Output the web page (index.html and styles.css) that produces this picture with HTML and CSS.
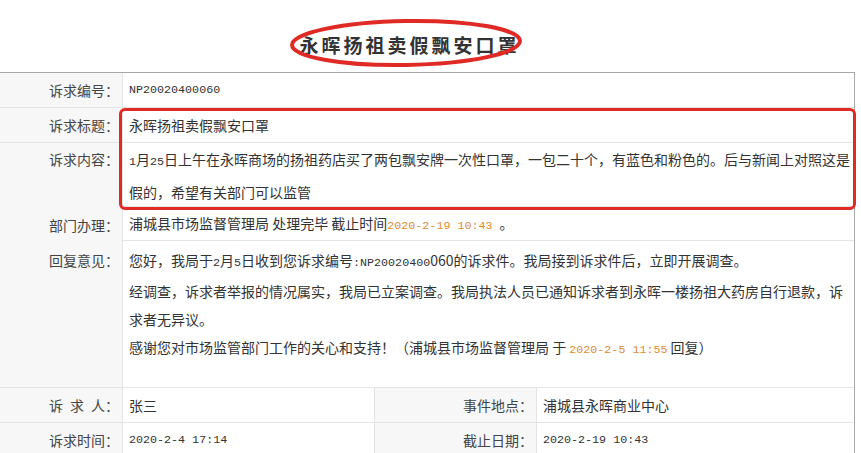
FILE: index.html
```html
<!DOCTYPE html>
<html lang="zh-CN">
<head>
<meta charset="utf-8">
<title>永晖扬祖卖假飘安口罩</title>
<link rel="stylesheet" href="styles.css">
</head>
<body>
<div class="page">
  <header class="head">
    <h1 class="title">永晖扬祖卖假飘安口罩</h1>
    <svg class="circle" width="250" height="60" viewBox="0 0 250 60">
      <ellipse cx="125" cy="29" rx="114" ry="22" fill="none" stroke="#e02a25" stroke-width="4" transform="rotate(-1 125 29)"/>
    </svg>
  </header>

  <div class="sheet">
    <div class="row r1">
      <div class="lab">诉求编号：</div>
      <div class="val"><span class="mono">NP20020400060</span></div>
    </div>
    <div class="row r2">
      <div class="lab">诉求标题：</div>
      <div class="val">永晖扬祖卖假飘安口罩</div>
    </div>
    <div class="row r3">
      <div class="lab">诉求内容：</div>
      <div class="val"><span class="mono">1</span>月<span class="mono">25</span>日上午在永晖商场的扬祖药店买了两包飘安牌一次性口罩，一包二十个，有蓝色和粉色的。后与新闻上对照这是<span>假的，希望有关部门可以监管</span></div>
    </div>
    <div class="row r4">
      <div class="lab">部门办理：</div>
      <div class="val">浦城县市场监督管理局 处理完毕 截止时间<span class="mono hl">2020-2-19 10:43 </span>。</div>
    </div>
    <div class="row r5">
      <div class="lab">回复意见：</div>
      <div class="val">您好，我局于<span class="mono">2</span>月<span class="mono">5</span>日收到您诉求编号<span class="mono">:NP20020400</span>060的诉求件。我局接到诉求件后，立即开展调查。<br>经调查，诉求者举报的情况属实，我局已立案调查。我局执法人员已通知诉求者到永晖一楼扬祖大药房自行退款，诉<span>求者无异议。</span><br>感谢您对市场监管部门工作的关心和支持！（浦城县市场监督管理局 于 <span class="mono hl">2020-2-5 11:55</span> 回复）</div>
    </div>
    <div class="row r6 quad">
      <div class="lab">诉&ensp;求&ensp;人：</div>
      <div class="val">张三</div>
      <div class="lab lab2">事件地点：</div>
      <div class="val">浦城县永晖商业中心</div>
    </div>
    <div class="row r7 quad">
      <div class="lab">诉求时间：</div>
      <div class="val"><span class="mono">2020-2-4 17:14</span></div>
      <div class="lab lab2">截止日期：</div>
      <div class="val"><span class="mono">2020-2-19 10:43</span></div>
    </div>
    <div class="mark"></div>
  </div>
</div>
</body>
</html>
```

FILE: styles.css
```css
* { box-sizing: border-box; }
html, body { margin: 0; padding: 0; background: #fff; }
body {
  font-family: "Noto Sans CJK SC", "Noto Sans", sans-serif;
  font-size: 14px;
  color: #333;
}
.page { width: 855px; }
.head {
  position: relative;
  height: 72px;
  display: flex;
  align-items: center;
  justify-content: center;
  padding: 18px 36px 0 0;
}
.title {
  margin: 0;
  font-size: 19px;
  font-weight: 700;
  letter-spacing: 3px;
  line-height: 24px;
  color: #333;
}
.circle {
  position: absolute;
  left: 281px;
  top: 14px;
}
.sheet {
  position: relative;
  border-top: 1px solid #a8a8a8;
  border-right: 1px solid #a8a8a8;
}
.row {
  display: grid;
  grid-template-columns: 123px 1fr;
  border-bottom: 1px solid #e4e4e4;
}
.row.quad { grid-template-columns: 123px 252px 162px 1fr; }
.lab {
  background: #f7f7f7;
  border-right: 1px solid #e4e4e4;
  text-align: right;
  padding-right: 3px;
  color: #444;
  display: flex;
  align-items: center;
  justify-content: flex-end;
  white-space: nowrap;
}
.val {
  padding: 0 1px 0 6px;
  display: flex;
  align-items: center;
  line-height: 20px;
}
.r1 { height: 35px; }
.r2 { height: 35px; }
.r3 { height: 64px; }
.r3 .val { display: block; line-height: 30px; padding-top: 1px; }
.r3 .lab { align-items: flex-start; padding-top: 1px; line-height: 30px; }
.r4 { height: 34px; }
.r4 .val { display: block; line-height: 33px; white-space: pre; }
.r5 { height: 147px; }
.r5 .val { display: block; line-height: 28px; padding-top: 5px; }
.r5 .lab { align-items: flex-start; padding-top: 5px; line-height: 28px; }
.r6 { height: 35px; }
.r7 { height: 35px; }
.quad .val:nth-child(2) { border-right: 1px solid #e4e4e4; }
.mono {
  font-family: "Liberation Mono", "DejaVu Sans Mono", monospace;
  font-size: 11.7px;
}
.hl { color: #de8c32; }
.mark {
  position: absolute;
  left: 119px;
  top: 35px;
  width: 737px;
  height: 102px;
  border: 3px solid #e02a25;
  border-radius: 6px;
  pointer-events: none;
}
```
